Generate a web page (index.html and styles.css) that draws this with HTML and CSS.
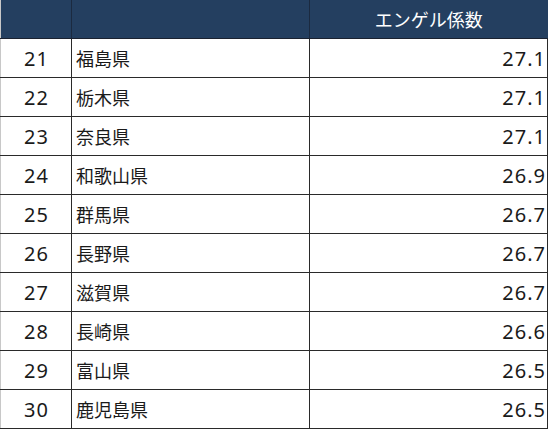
FILE: index.html
```html
<!DOCTYPE html>
<html lang="ja">
<head>
<meta charset="utf-8">
<link rel="stylesheet" href="styles.css">
</head>
<body>
<table class="rank">
  <colgroup>
    <col class="c-no"><col class="c-name"><col class="c-val">
  </colgroup>
  <thead>
    <tr><th></th><th></th><th class="h-val">エンゲル係数</th></tr>
  </thead>
  <tbody>
    <tr><td class="no">21</td><td class="name">福島県</td><td class="val">27.1</td></tr>
    <tr><td class="no">22</td><td class="name">栃木県</td><td class="val">27.1</td></tr>
    <tr><td class="no">23</td><td class="name">奈良県</td><td class="val">27.1</td></tr>
    <tr><td class="no">24</td><td class="name">和歌山県</td><td class="val">26.9</td></tr>
    <tr><td class="no">25</td><td class="name">群馬県</td><td class="val">26.7</td></tr>
    <tr><td class="no">26</td><td class="name">長野県</td><td class="val">26.7</td></tr>
    <tr><td class="no">27</td><td class="name">滋賀県</td><td class="val">26.7</td></tr>
    <tr><td class="no">28</td><td class="name">長崎県</td><td class="val">26.6</td></tr>
    <tr><td class="no">29</td><td class="name">富山県</td><td class="val">26.5</td></tr>
    <tr><td class="no">30</td><td class="name">鹿児島県</td><td class="val">26.5</td></tr>
  </tbody>
</table>
</body>
</html>
```
FILE: styles.css
```css
html, body {
  margin: 0;
  padding: 0;
  background: #ffffff;
}
body {
  font-family: "Noto Sans", "Noto Sans CJK JP", sans-serif;
  color: #1a1a1a;
}
.rank {
  border-collapse: collapse;
  table-layout: fixed;
  width: 548px;
  margin-left: 0;
}
.c-no { width: 71px; }
.c-name { width: 238px; }
.c-val { width: 238px; }
.rank th {
  background: #243f60;
  color: #ffffff;
  height: 38px;
  padding: 0;
  font-weight: normal;
  font-family: "Noto Sans CJK JP", sans-serif;
  font-size: 18px;
  border-left: 1px solid #243f60;
  border-bottom: 1px solid #1b2230;
}
.rank th + th { border-left: 1px solid #1b2a40; }
.rank th:first-child { border-left: 1px solid #c8c8c8; }
.rank td {
  height: 38px;
  padding: 0 4px;
  font-size: 20px;
  border: 1px solid #2a2a2a;
  line-height: 20px;
  vertical-align: middle;
}
.rank td:first-child { border-left: 1px solid #c8c8c8; }
.rank td.no {
  text-align: center;
  height: 36px;
  padding-top: 2px;
  letter-spacing: 1px;
  text-indent: 1px;
}
.rank td.name {
  font-family: "Noto Sans CJK JP", sans-serif;
  font-size: 18px;
  text-align: left;
  padding-left: 4px;
}
.rank td.val {
  text-align: right;
  height: 36px;
  padding-right: 1px;
  padding-top: 2px;
  letter-spacing: 1px;
}
```
